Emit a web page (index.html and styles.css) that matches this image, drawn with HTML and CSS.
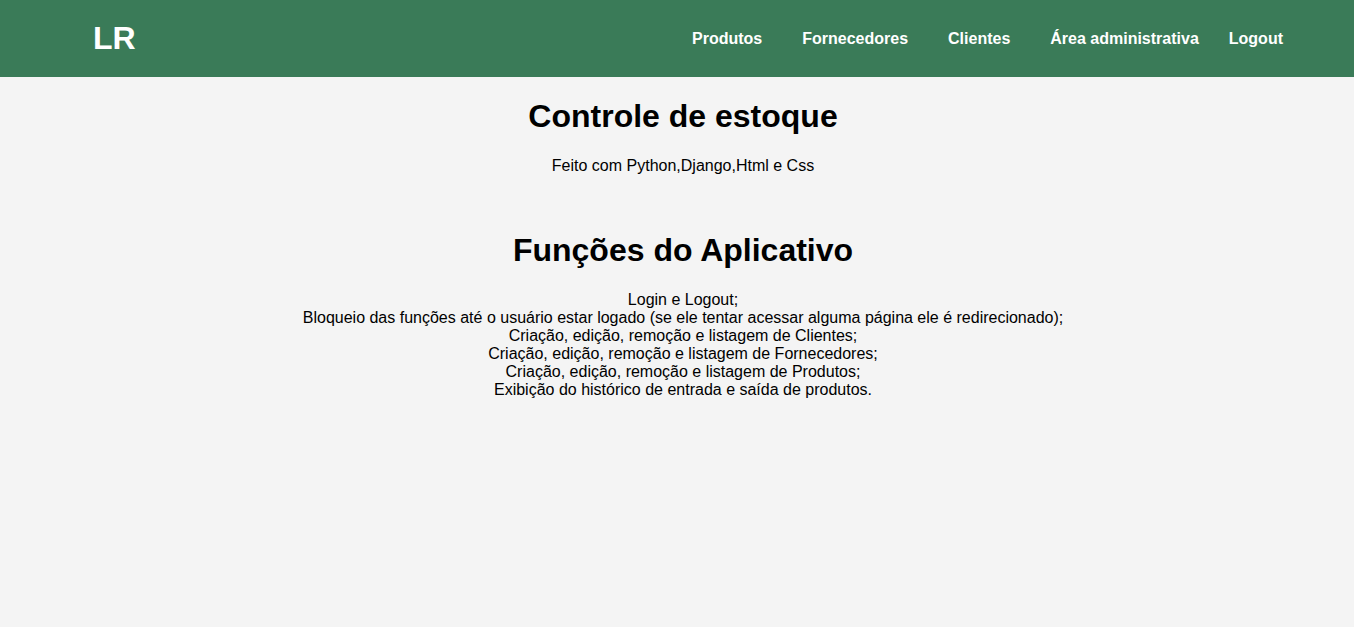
FILE: index.html
```html
<!DOCTYPE html>
<html lang="pt-br">
<head>
<meta charset="utf-8">
<title>Controle de estoque</title>
<link rel="stylesheet" href="styles.css">
</head>
<body>
<header class="topbar">
  <a class="logo" href="#">LR</a>
  <nav class="nav">
    <a href="#">Produtos</a>
    <a href="#">Fornecedores</a>
    <a href="#">Clientes</a>
    <a href="#">Área administrativa</a>
    <a class="logout" href="#">Logout</a>
  </nav>
</header>
<main class="content">
  <section class="intro">
    <h1>Controle de estoque</h1>
    <p>Feito com Python,Django,Html e Css</p>
  </section>
  <section class="features">
    <h1>Funções do Aplicativo</h1>
    <p>Login e Logout;<br>
    Bloqueio das funções até o usuário estar logado (se ele tentar acessar alguma página ele é redirecionado);<br>
    Criação, edição, remoção e listagem de Clientes;<br>
    Criação, edição, remoção e listagem de Fornecedores;<br>
    Criação, edição, remoção e listagem de Produtos;<br>
    Exibição do histórico de entrada e saída de produtos.</p>
  </section>
</main>
</body>
</html>
```
FILE: styles.css
```css
html, body {
  margin: 0;
  padding: 0;
}
body {
  background: #f4f4f4;
  font-family: "Liberation Sans", Arial, sans-serif;
  color: #000;
  font-size: 16px;
}
.topbar {
  height: 77px;
  background: #3a7b58;
  display: flex;
  align-items: center;
  justify-content: space-between;
  padding: 0 71px 0 93px;
}
.logo {
  color: #fff;
  text-decoration: none;
  font-weight: bold;
  font-size: 32px;
}
.nav {
  display: flex;
  align-items: center;
  gap: 40px;
}
.nav a {
  color: #fff;
  text-decoration: none;
  font-weight: bold;
  font-size: 16px;
}
.nav a.logout {
  margin-left: -10px;
}
.content {
  text-align: center;
  padding-left: 12px;
}
.content h1 {
  font-size: 32px;
  margin: 21px 0;
}
.content p {
  margin: 21px 0;
  line-height: 18px;
}
.intro p {
  margin-top: 22px;
}
.features {
  padding-top: 15px;
}
.features p {
  margin-top: 22px;
}
```
